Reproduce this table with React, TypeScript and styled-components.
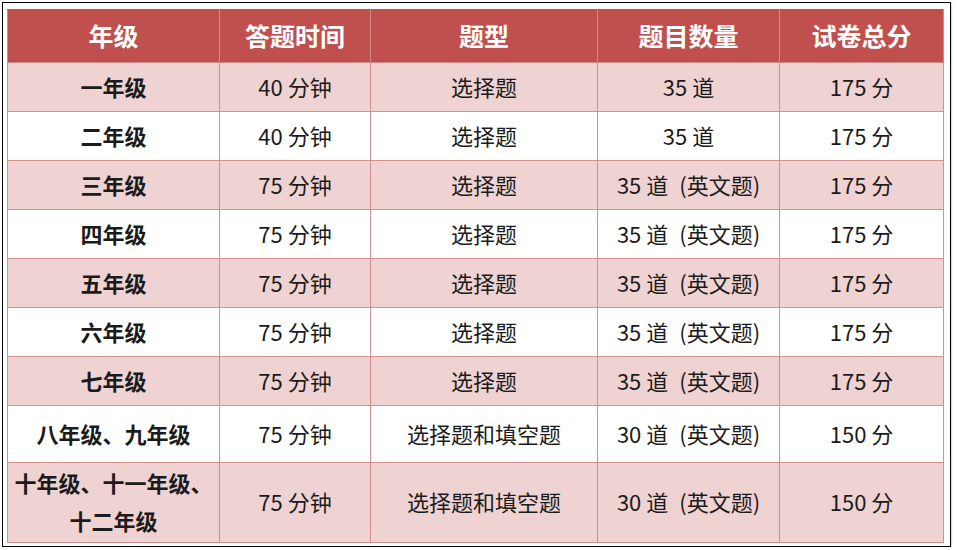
import React from 'react';
import styled, { createGlobalStyle } from 'styled-components';

const GlobalStyle = createGlobalStyle`
    html, body {
        margin: 0;
        padding: 0;
        background: #ffffff;
    }
    body {
        font-family: 'Noto Sans CJK SC', 'Noto Sans', sans-serif;
    }
`;

const Frame = styled.div`
    box-sizing: border-box;
    width: 949px;
    height: 545px;
    margin: 2px 0 0 2px;
    padding: 6px 4px 0 4px;
    border: 1px solid #000;
    box-shadow: 1px 1px 1px rgba(0, 0, 0, 0.15);
`;

const Table = styled.table`
    border-collapse: collapse;
    table-layout: fixed;
    color: #1b1b1b;
    font-size: 22px;
`;

const HeadRow = styled.tr`
    height: 53px;
    background: #c0504d;
`;

const HeadCell = styled.th<{ $w: number }>`
    width: ${(p) => p.$w}px;
    padding: 0 0 2px;
    color: #ffffff;
    font-size: 25px;
    font-weight: 700;
    line-height: 34px;
    text-align: center;
    border: 1px solid #d18a88;
    border-top-color: #c0504d;
`;

const Row = styled.tr<{ $shade: boolean; $h: number }>`
    height: ${(p) => p.$h}px;
    background: ${(p) => (p.$shade ? '#efd2d2' : '#ffffff')};
`;

const Cell = styled.td<{ $bold?: boolean }>`
    padding: 0 0 3px;
    text-align: center;
    vertical-align: middle;
    font-weight: ${(p) => (p.$bold ? 700 : 400)};
    line-height: ${(p) => (p.$bold ? '38px' : '28px')};
    border: 1px solid #d4908e;
    white-space: nowrap;
`;

interface RowData {
    grade: React.ReactNode;
    time: string;
    kind: string;
    count: string;
    score: string;
    height: number;
}

const columns = [
    { title: '年级', width: 211 },
    { title: '答题时间', width: 150 },
    { title: '题型', width: 226 },
    { title: '题目数量', width: 181 },
    { title: '试卷总分', width: 163 },
];

const EN = '35 道\u2002(英文题)';
const EN30 = '30 道\u2002(英文题)';

const rows: RowData[] = [
    { grade: '一年级', time: '40 分钟', kind: '选择题', count: '35 道', score: '175 分', height: 49 },
    { grade: '二年级', time: '40 分钟', kind: '选择题', count: '35 道', score: '175 分', height: 49 },
    { grade: '三年级', time: '75 分钟', kind: '选择题', count: EN, score: '175 分', height: 49 },
    { grade: '四年级', time: '75 分钟', kind: '选择题', count: EN, score: '175 分', height: 49 },
    { grade: '五年级', time: '75 分钟', kind: '选择题', count: EN, score: '175 分', height: 49 },
    { grade: '六年级', time: '75 分钟', kind: '选择题', count: EN, score: '175 分', height: 49 },
    { grade: '七年级', time: '75 分钟', kind: '选择题', count: EN, score: '175 分', height: 49 },
    {
        grade: '八年级、九年级',
        time: '75 分钟',
        kind: '选择题和填空题',
        count: EN30,
        score: '150 分',
        height: 57,
    },
    {
        grade: (
            <>
                十年级、十一年级、
                <br />
                十二年级
            </>
        ),
        time: '75 分钟',
        kind: '选择题和填空题',
        count: EN30,
        score: '150 分',
        height: 80,
    },
];

const App = () => (
    <>
        <GlobalStyle />
        <Frame>
            <Table>
                <thead>
                    <HeadRow>
                        {columns.map((c) => (
                            <HeadCell key={c.title} $w={c.width}>
                                {c.title}
                            </HeadCell>
                        ))}
                    </HeadRow>
                </thead>
                <tbody>
                    {rows.map((r, i) => (
                        <Row key={i} $shade={i % 2 === 0} $h={r.height}>
                            <Cell $bold>{r.grade}</Cell>
                            <Cell>{r.time}</Cell>
                            <Cell>{r.kind}</Cell>
                            <Cell>{r.count}</Cell>
                            <Cell>{r.score}</Cell>
                        </Row>
                    ))}
                </tbody>
            </Table>
        </Frame>
    </>
);

export default App;
